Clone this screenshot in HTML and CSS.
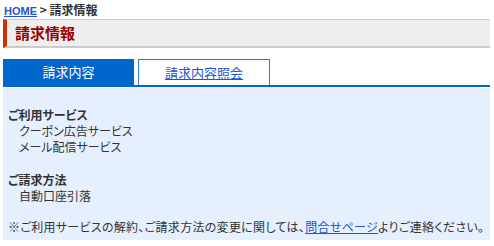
FILE: index.html
```html
<!DOCTYPE html>
<html lang="ja">
<head>
    <meta charset="UTF-8">
    <title>請求情報</title>
    <link rel="stylesheet" href="styles.css">
</head>
<body>
    <div class="page">
        <div class="breadcrumb">
            <a href="#">HOME</a> &gt; 請求情報
        </div>
        <h1 class="page-title">請求情報</h1>
        <div class="tabs">
            <div class="tab active">請求内容</div>
            <div class="tab"><a href="#">請求内容照会</a></div>
        </div>
        <div class="content">
            <dl>
                <dt>ご利用サービス</dt>
                <dd>クーポン広告サービス</dd>
                <dd>メール配信サービス</dd>
            </dl>
            <dl>
                <dt>ご請求方法</dt>
                <dd>自動口座引落</dd>
            </dl>
            <p class="note">※ご利用サービスの解約、ご請求方法の変更に関しては、<a href="#">問合せページ</a>よりご連絡ください。</p>
        </div>
    </div>
</body>
</html>
```

FILE: styles.css
```css
body {
    margin: 0;
    font-family: "Noto Sans CJK JP", "Liberation Sans", sans-serif;
    font-size: 12px;
    font-feature-settings: "palt";
    color: #333333;
    background: #ffffff;
}

a {
    color: #2255cc;
}

.page {
    width: 487px;
    margin-left: 3px;
}

.breadcrumb {
    height: 17px;
    line-height: 19px;
    padding-left: 1px;
    font-weight: bold;
    color: #333333;
}

.breadcrumb a {
    font-family: "Liberation Sans", sans-serif;
    font-size: 11px;
}

.page-title {
    margin: 2px 0 0;
    height: 26px;
    line-height: 26px;
    padding-left: 8px;
    font-size: 15px;
    font-weight: bold;
    color: #990000;
    background: #eeeeee;
    border-top: 1px solid #cccccc;
    border-bottom: 2px solid #cccccc;
    border-left: 4px solid #cc3300;
}

.tabs {
    display: flex;
    gap: 4px;
    margin-top: 11px;
    border-bottom: 2px solid #0066cc;
}

.tab {
    width: 131px;
    height: 26px;
    line-height: 26px;
    text-align: center;
    font-size: 13px;
    box-sizing: border-box;
}

.tab.active {
    background: #0066cc;
    color: #ffffff;
}

.tab a {
    color: #2255cc;
}

.tab:not(.active) {
    width: 132px;
    background: #ffffff;
    border: 1px solid #3377dd;
    border-bottom: none;
    line-height: 25px;
}

.content {
    margin-top: 1px;
    height: 152px;
    box-sizing: border-box;
    padding: 19px 5px 0;
    background: #e6effd;
}

dl {
    margin: 0 0 17px;
    line-height: 16px;
}

dl + dl {
    margin-bottom: 15px;
}

dt {
    font-weight: bold;
}

dd {
    margin-left: 11px;
}

.note {
    margin: 0;
    line-height: 16px;
    letter-spacing: 0.3px;
}
```
